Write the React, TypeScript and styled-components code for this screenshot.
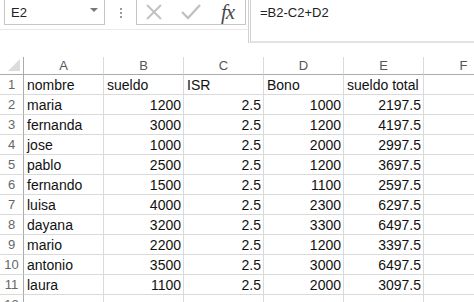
import React from "react";
import styled, { createGlobalStyle } from "styled-components";

const Global = createGlobalStyle`
  html, body { margin: 0; padding: 0; background: #ffffff; }
  body { width: 474px; height: 302px; overflow: hidden; font-family: "Liberation Sans", Arial, sans-serif; }
`;

const Page = styled.div`
  width: 474px;
  height: 302px;
  overflow: hidden;
  display: flex;
  flex-direction: column;
  background: #fff;
`;

const Bar = styled.div`
  display: flex;
  height: 43px;
  flex: none;
`;

const LeftTools = styled.div`
  display: flex;
  align-items: flex-start;
  width: 248px;
  height: 29px;
  border-bottom: 1px solid #e9e9e9;
  flex: none;
`;

const NameBox = styled.div`
  margin-left: 4px;
  width: 101px;
  height: 25px;
  box-sizing: border-box;
  border: 1px solid #c6c6c6;
  border-top: none;
  display: flex;
  align-items: center;
  justify-content: space-between;
  padding: 0 6px 0 6px;
  font-size: 13px;
  color: #222;
`;

const Caret = styled.span`
  width: 0;
  height: 0;
  border-left: 4px solid transparent;
  border-right: 4px solid transparent;
  border-top: 4px solid #777;
  margin-top: -4px;
`;

const Dots = styled.div`
  width: 31px;
  display: flex;
  flex-direction: column;
  align-items: center;
  gap: 2px;
  padding-top: 8px;
  span {
    width: 2px;
    height: 2px;
    background: #9a9a9a;
  }
`;

const FxBox = styled.div`
  width: 110px;
  height: 25px;
  box-sizing: border-box;
  border: 1px solid #c6c6c6;
  border-top: none;
  display: flex;
  align-items: center;
  padding-left: 6px;
  gap: 14px;
`;

const FxText = styled.span`
  font-family: "Liberation Serif", "Times New Roman", serif;
  font-style: italic;
  font-size: 21px;
  line-height: 22px;
  color: #4a4a4a;
  margin-left: 4px;
  letter-spacing: -1px;
`;

const FormulaInput = styled.div`
  flex: 1;
  height: 43px;
  box-sizing: border-box;
  border-left: 3px double #d0d0d0;
  border-bottom: 2px solid #e2e2e2;
  padding: 5px 0 0 9px;
  font-size: 13px;
  color: #222;
`;

const Gap = styled.div`
  height: 14px;
  flex: none;
`;

const Grid = styled.div`
  display: grid;
  grid-template-columns: 24px repeat(6, 80px);
  grid-auto-rows: 20px;
  grid-template-rows: 18px;
  font-size: 14px;
  color: #111;
`;

const Corner = styled.div`
  box-sizing: border-box;
  border-right: 1px solid #ababab;
  border-bottom: 1px solid #ababab;
  position: relative;
  &::after {
    content: "";
    position: absolute;
    right: 3px;
    bottom: 3px;
    width: 0;
    height: 0;
    border-left: 12px solid transparent;
    border-bottom: 12px solid #dcdcdc;
  }
`;

const ColHead = styled.div`
  box-sizing: border-box;
  border-right: 1px solid #dadada;
  border-bottom: 1px solid #ababab;
  display: flex;
  align-items: center;
  justify-content: center;
  color: #555;
  font-size: 13px;
`;

const RowHead = styled.div`
  box-sizing: border-box;
  border-right: 1px solid #ababab;
  border-bottom: 1px solid #dadada;
  display: flex;
  align-items: center;
  justify-content: center;
  color: #666;
  font-size: 13px;
`;

const Cell = styled.div<{ $num?: boolean }>`
  box-sizing: border-box;
  border-right: 1px solid #dadada;
  border-bottom: 1px solid #dadada;
  display: flex;
  align-items: center;
  justify-content: ${(p) => (p.$num ? "flex-end" : "flex-start")};
  padding: 0 2px 0 3px;
  white-space: nowrap;
  overflow: visible;
`;

const rows: (string | number)[][] = [
  ["nombre", "sueldo", "ISR", "Bono", "sueldo total", ""],
  ["maria", 1200, 2.5, 1000, 2197.5, ""],
  ["fernanda", 3000, 2.5, 1200, 4197.5, ""],
  ["jose", 1000, 2.5, 2000, 2997.5, ""],
  ["pablo", 2500, 2.5, 1200, 3697.5, ""],
  ["fernando", 1500, 2.5, 1100, 2597.5, ""],
  ["luisa", 4000, 2.5, 2300, 6297.5, ""],
  ["dayana", 3200, 2.5, 3300, 6497.5, ""],
  ["mario", 2200, 2.5, 1200, 3397.5, ""],
  ["antonio", 3500, 2.5, 3000, 6497.5, ""],
  ["laura", 1100, 2.5, 2000, 3097.5, ""],
  ["", "", "", "", "", ""],
];

const cols = ["A", "B", "C", "D", "E", "F"];

export default function App() {
  return (
    <>
      <Global />
      <Page>
        <Bar>
          <LeftTools>
            <NameBox>
              <span>E2</span>
              <Caret />
            </NameBox>
            <Dots>
              <span />
              <span />
              <span />
            </Dots>
            <FxBox>
              <svg width="22" height="22" viewBox="0 0 22 22">
                <path d="M4 4 L18 18 M18 4 L4 18" stroke="#c2c2c2" strokeWidth="2" fill="none" />
              </svg>
              <svg width="24" height="22" viewBox="0 0 24 22">
                <path d="M3 11 L9 17 L21 4" stroke="#c2c2c2" strokeWidth="2.4" fill="none" />
              </svg>
              <FxText>fx</FxText>
            </FxBox>
          </LeftTools>
          <FormulaInput>=B2-C2+D2</FormulaInput>
        </Bar>
        <Gap />
        <Grid>
          <Corner />
          {cols.map((c) => (
            <ColHead key={c}>{c}</ColHead>
          ))}
          {rows.map((r, i) => (
            <React.Fragment key={i}>
              <RowHead>{i + 1}</RowHead>
              {r.map((v, j) => (
                <Cell key={j} $num={typeof v === "number"}>
                  {v}
                </Cell>
              ))}
            </React.Fragment>
          ))}
        </Grid>
      </Page>
    </>
  );
}
